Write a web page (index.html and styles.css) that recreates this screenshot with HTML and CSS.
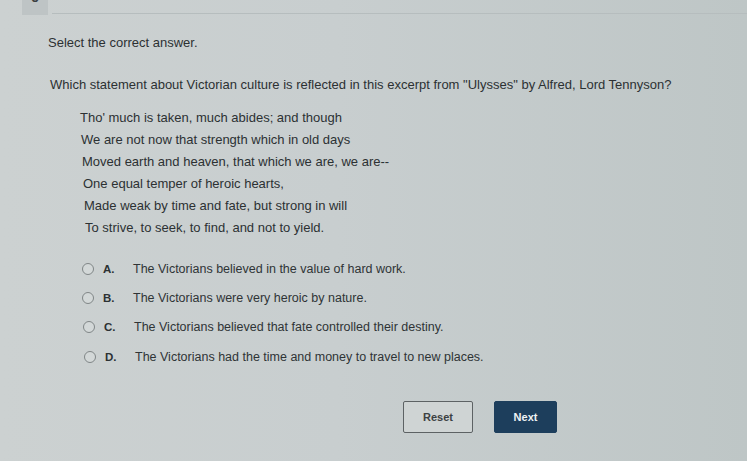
FILE: index.html
```html
<!DOCTYPE html>
<html>
<head>
<meta charset="utf-8">
<link rel="stylesheet" href="styles.css">
</head>
<body>
<div class="page">
  <div class="topbar">
    <div class="tab"><span class="tabnum">5</span></div>
    <div class="rule"></div>
  </div>
  <main class="content">
    <p class="instr">Select the correct answer.</p>
    <p class="question">Which statement about Victorian culture is reflected in this excerpt from "Ulysses" by Alfred, Lord Tennyson?</p>
    <div class="poem">
      <div class="line">Tho' much is taken, much abides; and though</div>
      <div class="line">We are not now that strength which in old days</div>
      <div class="line">Moved earth and heaven, that which we are, we are--</div>
      <div class="line">One equal temper of heroic hearts,</div>
      <div class="line">Made weak by time and fate, but strong in will</div>
      <div class="line">To strive, to seek, to find, and not to yield.</div>
    </div>
    <div class="options">
      <label class="opt"><span class="radio"></span><span class="letter">A.</span><span class="otext">The Victorians believed in the value of hard work.</span></label>
      <label class="opt"><span class="radio"></span><span class="letter">B.</span><span class="otext">The Victorians were very heroic by nature.</span></label>
      <label class="opt"><span class="radio"></span><span class="letter">C.</span><span class="otext">The Victorians believed that fate controlled their destiny.</span></label>
      <label class="opt"><span class="radio"></span><span class="letter">D.</span><span class="otext">The Victorians had the time and money to travel to new places.</span></label>
    </div>
    <div class="actions">
      <button class="btn reset">Reset</button>
      <button class="btn next">Next</button>
    </div>
  </main>
</div>
</body>
</html>
```
FILE: styles.css
```css
html, body {
  margin: 0;
  padding: 0;
}
body {
  width: 747px;
  height: 461px;
  overflow: hidden;
  font-family: "Liberation Sans", Arial, sans-serif;
  color: #2c3133;
  background: linear-gradient(90deg, #ccd1d1 0%, #c8cecf 45%, #bec6c6 100%);
}
.page {
  height: 461px;
  display: flex;
  flex-direction: column;
}
.topbar {
  display: flex;
  align-items: flex-end;
  height: 15px;
}
.tab {
  margin-left: 22px;
  width: 26px;
  height: 15px;
  background: #bec4c5;
  display: flex;
  justify-content: center;
  overflow: hidden;
}
.tabnum {
  font-size: 13px;
  font-weight: bold;
  line-height: 13px;
  margin-top: -9px;
  color: #3a3f41;
}
.rule {
  flex: 1;
  height: 1px;
  margin-left: 4px;
  margin-bottom: 1px;
  background: #b6bdbe;
}
.content {
  padding-left: 48px;
}
.instr {
  margin: 20px 0 0 0;
  font-size: 13px;
  line-height: 16px;
}
.question {
  margin: 26px 0 0 2px;
  font-size: 13px;
  line-height: 16px;
}
.poem {
  margin: 14px 0 0 32px;
  font-size: 13px;
}
.line {
  height: 22px;
  line-height: 22px;
}
.line:nth-child(2) { padding-left: 1px; }
.line:nth-child(3) { padding-left: 2px; }
.line:nth-child(4) { padding-left: 3px; }
.line:nth-child(5) { padding-left: 4px; }
.line:nth-child(6) { padding-left: 5px; }
.options {
  margin: 15px 0 0 34px;
  display: flex;
  flex-direction: column;
}
.opt {
  display: flex;
  align-items: center;
  height: 29.4px;
  font-size: 12.5px;
}
.opt:nth-child(3) { padding-left: 1px; }
.opt:nth-child(4) { padding-left: 2px; }
.radio {
  width: 10px;
  height: 10px;
  border: 1.5px solid #808687;
  border-radius: 50%;
  background: #d3d8d8;
  box-sizing: content-box;
}
.letter {
  margin-left: 9px;
  width: 30px;
  font-weight: bold;
  font-size: 11.5px;
}
.otext {
  color: #2f3436;
}
.actions {
  margin: 29px 0 0 355px;
  display: flex;
  gap: 21px;
}
.btn {
  font-family: "Liberation Sans", Arial, sans-serif;
  font-size: 11px;
  font-weight: bold;
  height: 32px;
  border-radius: 2px;
  padding: 0;
}
.reset {
  width: 70px;
  background: #cfd4d4;
  border: 1.5px solid #5d6264;
  color: #3c4143;
}
.next {
  width: 63px;
  background: #1d3e5c;
  border: 1px solid #1d3e5c;
  color: #eef2f4;
}
```
